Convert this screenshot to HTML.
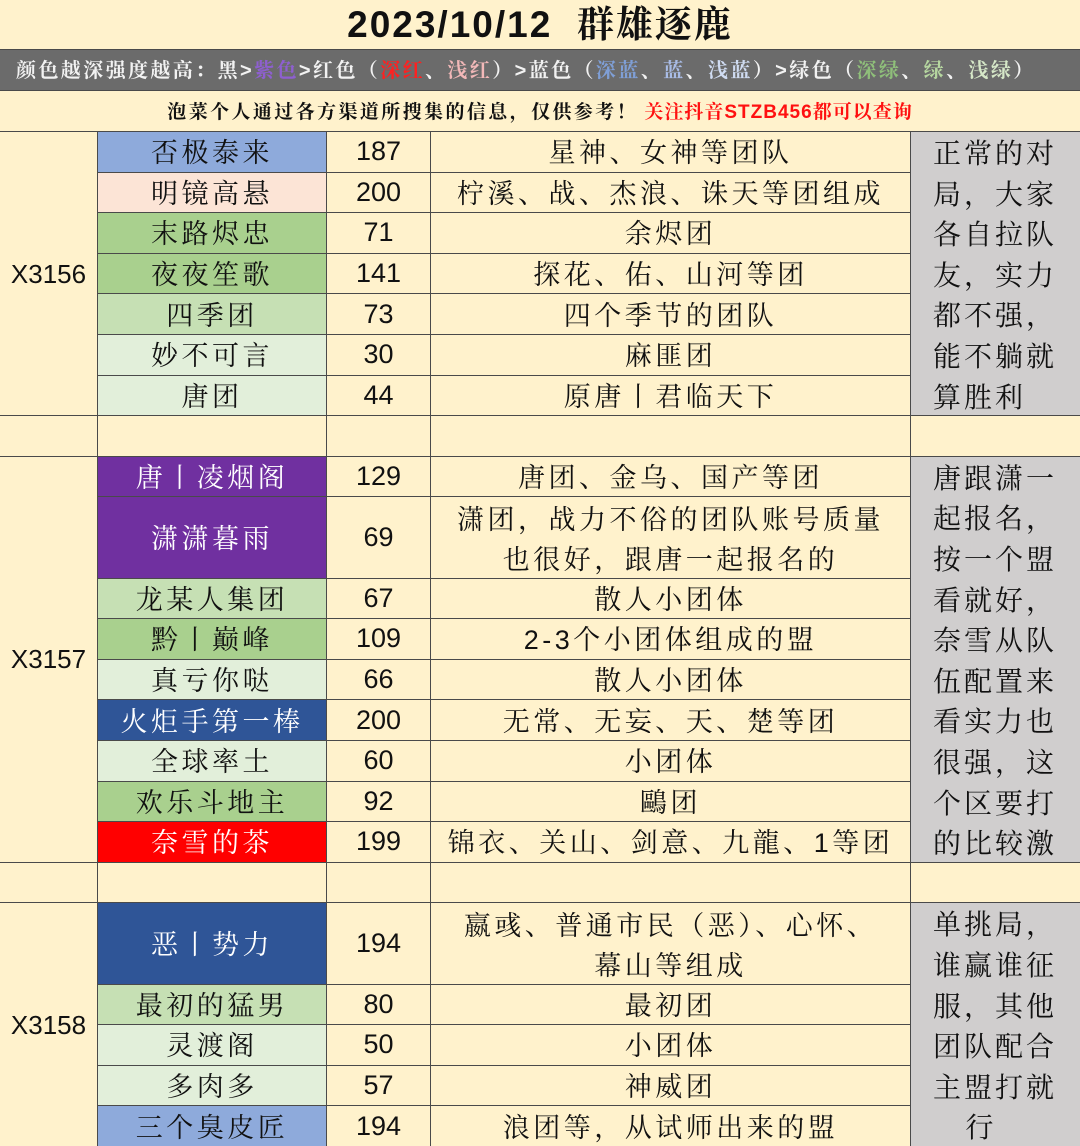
<!DOCTYPE html>
<html><head><meta charset="utf-8"><style>
*{margin:0;padding:0;box-sizing:border-box}
body{width:1080px;height:1146px;overflow:hidden;background:#fff2cc}
.g{display:grid;width:1080px;height:1146px;background:#4a4a4a;gap:1px;
grid-template-columns:97px 228px 103px 479px 169px;
grid-template-rows:49px 40px 40px repeat(25,1fr);
font-family:"Liberation Sans","Noto Serif CJK SC",serif;color:#111}
.g>div{background:#fff2cc;display:flex;align-items:center;justify-content:center;text-align:center;font-size:27px;letter-spacing:3.5px;line-height:1;white-space:nowrap;overflow:hidden;padding-top:4px}
.t{grid-column:1/6;font-size:37px!important;font-weight:bold;letter-spacing:2px!important;padding-top:0!important}
.lg{grid-column:1/6;background:#6b6b6b!important;color:#f2f2f2;font-size:20px!important;font-weight:bold;justify-content:flex-start!important;padding-left:16px;letter-spacing:2.4px!important;padding-top:2px!important}
.in{grid-column:1/6;font-size:19px!important;font-weight:bold;letter-spacing:2.4px!important;padding-top:2px!important}
.n{font-family:"Liberation Sans",sans-serif!important;font-size:27px!important;letter-spacing:0!important;padding-top:0!important}
.x{font-family:"Liberation Sans",sans-serif;font-size:26px!important;letter-spacing:0!important;padding-top:0!important}
.gr{background:#d0cece!important;line-height:40.6px!important;display:block!important;text-align:left!important;padding:2px 0 0 22px!important;white-space:normal!important;font-size:28px!important;letter-spacing:3px!important}
.b1{background:#8eaadb!important}.pk{background:#fce4d6!important}
.g2{background:#a9d08e!important}.g3{background:#c6e0b4!important}.g4{background:#e2efda!important}
.pu{background:#7030a0!important;color:#fff}.db{background:#2f5597!important;color:#fff}.rd{background:#ff0000!important;color:#fff}
.w2{line-height:40px!important;white-space:normal!important}
</style></head><body><div class="g">
<div class="t">2023/10/12&nbsp; 群雄逐鹿</div>
<div class="lg">颜色越深强度越高：黑&gt;<span style="color:#8e5fd0">紫色</span>&gt;红色（<span style="color:#ff2020">深红</span>、<span style="color:#f2b8b8">浅红</span>）&gt;蓝色（<span style="color:#7f9fd6">深蓝</span>、<span style="color:#a9bce6">蓝</span>、<span style="color:#d0dcf2">浅蓝</span>）&gt;绿色（<span style="color:#8fbf7a">深绿</span>、<span style="color:#b6d7a0">绿</span>、<span style="color:#d6e8c8">浅绿</span>）</div>
<div class="in">泡菜个人通过各方渠道所搜集的信息，仅供参考！<span style="color:#ff1010;letter-spacing:1px">&nbsp;关注抖音STZB456都可以查询</span></div>

<div class="x" style="grid-row:4/11">X3156</div>
<div class="b1">否极泰来</div><div class="n">187</div><div>星神、女神等团队</div>
<div class="gr" style="grid-column:5;grid-row:4/11">正常的对<br>局，大家<br>各自拉队<br>友，实力<br>都不强，<br>能不躺就<br>算胜利</div>
<div class="pk">明镜高悬</div><div class="n">200</div><div>柠溪、战、杰浪、诛天等团组成</div>
<div class="g2">末路烬忠</div><div class="n">71</div><div>余烬团</div>
<div class="g2">夜夜笙歌</div><div class="n">141</div><div>探花、佑、山河等团</div>
<div class="g3">四季团</div><div class="n">73</div><div>四个季节的团队</div>
<div class="g4">妙不可言</div><div class="n">30</div><div>麻匪团</div>
<div class="g4">唐团</div><div class="n">44</div><div>原唐丨君临天下</div>
<div></div><div></div><div></div><div></div><div></div>

<div class="x" style="grid-row:12/22">X3157</div>
<div class="pu">唐丨凌烟阁</div><div class="n">129</div><div>唐团、金乌、国产等团</div>
<div class="gr" style="grid-column:5;grid-row:12/22">唐跟潇一<br>起报名，<br>按一个盟<br>看就好，<br>奈雪从队<br>伍配置来<br>看实力也<br>很强，这<br>个区要打<br>的比较激</div>
<div class="pu" style="grid-row:span 2">潇潇暮雨</div><div class="n" style="grid-row:span 2">69</div><div class="w2" style="grid-row:span 2">潇团，战力不俗的团队账号质量<br>也很好，跟唐一起报名的</div>
<div class="g3">龙某人集团</div><div class="n">67</div><div>散人小团体</div>
<div class="g2">黔丨巅峰</div><div class="n">109</div><div>2-3个小团体组成的盟</div>
<div class="g4">真亏你哒</div><div class="n">66</div><div>散人小团体</div>
<div class="db">火炬手第一棒</div><div class="n">200</div><div>无常、无妄、天、楚等团</div>
<div class="g4">全球率土</div><div class="n">60</div><div>小团体</div>
<div class="g2">欢乐斗地主</div><div class="n">92</div><div>鷗团</div>
<div class="rd">奈雪的茶</div><div class="n">199</div><div>锦衣、关山、剑意、九龍、1等团</div>
<div></div><div></div><div></div><div></div><div></div>

<div class="x" style="grid-row:23/29">X3158</div>
<div class="db" style="grid-row:span 2">恶丨势力</div><div class="n" style="grid-row:span 2">194</div><div class="w2" style="grid-row:span 2">嬴彧、普通市民（恶）、心怀、<br>幕山等组成</div>
<div class="gr" style="grid-column:5;grid-row:23/29">单挑局，<br>谁赢谁征<br>服，其他<br>团队配合<br>主盟打就<br>&nbsp;&nbsp;&nbsp;行</div>
<div class="g3">最初的猛男</div><div class="n">80</div><div>最初团</div>
<div class="g4">灵渡阁</div><div class="n">50</div><div>小团体</div>
<div class="g4">多肉多</div><div class="n">57</div><div>神威团</div>
<div class="b1">三个臭皮匠</div><div class="n">194</div><div>浪团等，从试师出来的盟</div>
</div></body></html>
